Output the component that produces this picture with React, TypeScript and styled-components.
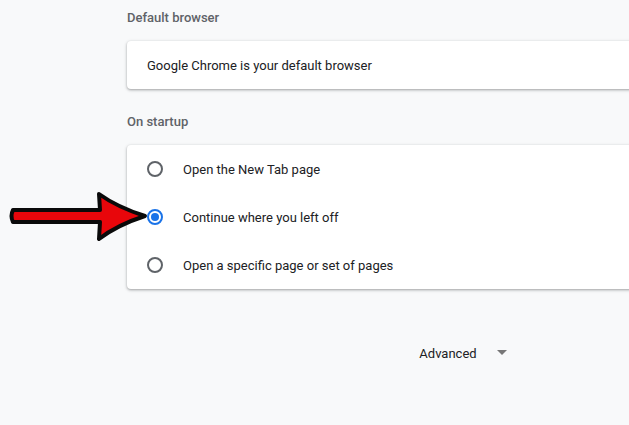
import React from "react";
import styled, { createGlobalStyle } from "styled-components";

const Global = createGlobalStyle`
  html, body { margin: 0; padding: 0; background: #f8f9fa; overflow: hidden; }
  body { font-family: Roboto, "Liberation Sans", Arial, sans-serif; }
`;

const Page = styled.div`
  position: relative;
  width: 629px;
  height: 425px;
  overflow: hidden;
  background: #f8f9fa;
`;

const Column = styled.div`
  margin-left: 127px;
  width: 680px;
  flex: none;
  display: flex;
  flex-direction: column;
`;

const SectionTitle = styled.div<{ $top: number }>`
  padding-top: ${(p) => p.$top}px;
  margin-bottom: 13px;
  line-height: 20px;
  font-size: 13px;
  font-weight: 500;
  color: #5f6368;
`;

const Card = styled.div`
  background: #fff;
  border-radius: 4px;
  box-shadow: 0 1px 2px rgba(60, 64, 67, 0.3), 0 1px 3px 1px rgba(60, 64, 67, 0.15);
  display: flex;
  flex-direction: column;
`;

const Row = styled.div`
  height: 48px;
  display: flex;
  align-items: center;
  padding: 0 20px;
  font-size: 13px;
  color: #202124;
`;

const Radio = styled.span<{ $checked?: boolean }>`
  box-sizing: border-box;
  width: 16px;
  height: 16px;
  border-radius: 50%;
  border: 2px solid ${(p) => (p.$checked ? "#1a73e8" : "#5f6368")};
  margin-right: 20px;
  display: flex;
  align-items: center;
  justify-content: center;
  flex: none;
  &::after {
    content: "";
    width: 8px;
    height: 8px;
    border-radius: 50%;
    background: ${(p) => (p.$checked ? "#1a73e8" : "transparent")};
  }
`;

const AdvancedRow = styled.div`
  margin-top: 54px;
  height: 20px;
  padding-right: 8px;
  display: flex;
  align-items: center;
  justify-content: center;
  gap: 20px;
  font-size: 13px;
  color: #202124;
`;

const Caret = styled.span`
  width: 0;
  height: 0;
  border-left: 5px solid transparent;
  border-right: 5px solid transparent;
  border-top: 5px solid #777;
  margin-top: -2px;
`;

const Arrow = styled.svg`
  position: absolute;
  left: 0;
  top: 185px;
`;

export default function App() {
  return (
    <Page>
      <Global />
      <Column>
        <SectionTitle $top={8}>Default browser</SectionTitle>
        <Card>
          <Row>Google Chrome is your default browser</Row>
        </Card>
        <SectionTitle $top={23}>On startup</SectionTitle>
        <Card>
          <Row>
            <Radio />
            Open the New Tab page
          </Row>
          <Row>
            <Radio $checked />
            Continue where you left off
          </Row>
          <Row>
            <Radio />
            Open a specific page or set of pages
          </Row>
        </Card>
        <AdvancedRow>
          <span>Advanced</span>
          <Caret />
        </AdvancedRow>
      </Column>
      <Arrow width="160" height="60" viewBox="0 185 160 60">
        <path
          d="M13,210 L100,210 L99,194 Q117,207 145,216 Q117,225 99,239 L100,222 L13,222 Q10,216 13,210 Z"
          fill="#e8060b"
          stroke="#0a0a0a"
          strokeWidth="4"
          strokeLinejoin="round"
        />
      </Arrow>
    </Page>
  );
}
